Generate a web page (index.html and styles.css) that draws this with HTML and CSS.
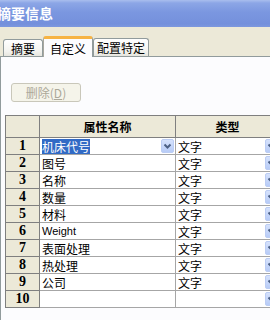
FILE: index.html
```html
<!DOCTYPE html>
<html lang="zh">
<head>
    <meta charset="UTF-8">
    <title>摘要信息</title>
    <link rel="stylesheet" href="styles.css">
</head>
<body>
    <div class="titlebar">摘要信息</div>

    <div class="tabs">
        <div class="tab tab-first">摘要</div>
        <div class="tab tab-active">自定义</div>
        <div class="tab tab-last">配置特定</div>
    </div>

    <div class="panel">
        <button class="btn-delete" disabled>删除(<u>D</u>)</button>

        <table class="grid">
            <colgroup>
                <col class="col-num">
                <col class="col-name">
                <col class="col-type">
            </colgroup>
            <thead>
                <tr>
                    <th class="corner"></th>
                    <th>属性名称</th>
                    <th>类型</th>
                </tr>
            </thead>
            <tbody>
                <tr>
                    <td class="num">1</td>
                    <td><div class="cell"><span class="selected">机床代号</span><span class="combo"></span></div></td>
                    <td><div class="cell"><span>文字</span><span class="combo"></span></div></td>
                </tr>
                <tr>
                    <td class="num">2</td>
                    <td><div class="cell"><span>图号</span></div></td>
                    <td><div class="cell"><span>文字</span><span class="combo"></span></div></td>
                </tr>
                <tr>
                    <td class="num">3</td>
                    <td><div class="cell"><span>名称</span></div></td>
                    <td><div class="cell"><span>文字</span><span class="combo"></span></div></td>
                </tr>
                <tr>
                    <td class="num">4</td>
                    <td><div class="cell"><span>数量</span></div></td>
                    <td><div class="cell"><span>文字</span><span class="combo"></span></div></td>
                </tr>
                <tr>
                    <td class="num">5</td>
                    <td><div class="cell"><span>材料</span></div></td>
                    <td><div class="cell"><span>文字</span><span class="combo"></span></div></td>
                </tr>
                <tr>
                    <td class="num">6</td>
                    <td><div class="cell"><span class="latin">Weight</span></div></td>
                    <td><div class="cell"><span>文字</span><span class="combo"></span></div></td>
                </tr>
                <tr>
                    <td class="num">7</td>
                    <td><div class="cell"><span>表面处理</span></div></td>
                    <td><div class="cell"><span>文字</span><span class="combo"></span></div></td>
                </tr>
                <tr>
                    <td class="num">8</td>
                    <td><div class="cell"><span>热处理</span></div></td>
                    <td><div class="cell"><span>文字</span><span class="combo"></span></div></td>
                </tr>
                <tr>
                    <td class="num">9</td>
                    <td><div class="cell"><span>公司</span></div></td>
                    <td><div class="cell"><span>文字</span><span class="combo"></span></div></td>
                </tr>
                <tr>
                    <td class="num">10</td>
                    <td><div class="cell"><span></span></div></td>
                    <td><div class="cell"><span></span><span class="combo"></span></div></td>
                </tr>
            </tbody>
        </table>
    </div>
</body>
</html>
```

FILE: styles.css
```css
/* window */
body {
    margin: 0;
    width: 270px;
    height: 320px;
    overflow: hidden;
    background-color: #ECE9D8;
    font-family: "Noto Sans CJK SC", sans-serif;
    font-size: 12px;
    color: #000;
    display: flex;
    flex-direction: column;
}

.titlebar {
    height: 27px;
    line-height: 26px;
    flex-shrink: 0;
    background: linear-gradient(#A9BEEE 0px, #8CA6E6 3px, #7B97E0 12px, #7490DC 24px, #7D98DE 27px);
    color: white;
    font-weight: bold;
    font-size: 14px;
    text-indent: -3px;
    white-space: nowrap;
}

/* tabs */
.tabs {
    height: 29px;
    flex-shrink: 0;
    display: flex;
    align-items: flex-end;
    padding-left: 3px;
}

.tab {
    height: 17px;
    line-height: 17px;
    box-sizing: border-box;
    border: 1px solid #919B9C;
    border-bottom: none;
    border-radius: 3px 3px 0 0;
    background: linear-gradient(#FFFFFF, #F3F3EF 70%, #E6E5DE);
    text-align: center;
    font-size: 12px;
}

.tab-first {
    width: 40px;
}

.tab-active {
    width: 50px;
    height: 21px;
    line-height: 19px;
    background: #FCFCFE;
    border-top: 3px solid #F6B343;
    border-left-color: #A8A8A0;
    margin-bottom: -1px;
    position: relative;
    z-index: 1;
}

.tab-last {
    width: 56px;
    height: 18px;
}

/* tab page */
.panel {
    flex: 1;
    background-color: #FCFCFE;
    border-top: 1px solid #919B9C;
    border-left: 1px solid #919B9C;
    display: flex;
    flex-direction: column;
    align-items: flex-start;
}

.btn-delete {
    margin: 26px 0 0 10px;
    width: 70px;
    height: 19px;
    padding: 0;
    border: 1px solid #C9C7BA;
    border-radius: 3px;
    background-color: #F5F4EA;
    color: #ACA899;
    font-family: "Noto Sans CJK SC", sans-serif;
    font-size: 12px;
    line-height: 16px;
}

/* property grid */
.grid {
    margin: 13px 0 0 4px;
    border-collapse: collapse;
    table-layout: fixed;
    width: 274px;
    flex-shrink: 0;
}

.col-num {
    width: 34px;
}

.col-name {
    width: 136px;
}

.col-type {
    width: 104px;
}

.grid th {
    height: 21px;
    padding: 0;
    background-color: #ECE9D8;
    border: 1px solid #7F7F7F;
    font-weight: bold;
    font-size: 12px;
    text-align: center;
}

.grid td {
    height: 16px;
    padding: 0;
    border: 1px solid #A6A6A6;
    border-left-color: #7F7F7F;
    background-color: #FFFFFF;
}

.grid td.num {
    background-color: #ECE9D8;
    border-color: #7F7F7F;
    text-align: center;
    font-family: "Liberation Serif", serif;
    font-weight: bold;
    font-size: 14px;
    line-height: 16px;
}

.cell {
    height: 16px;
    display: flex;
    align-items: center;
    justify-content: space-between;
    padding-left: 2px;
    padding-right: 1px;
    line-height: 15px;
    white-space: nowrap;
}

.selected {
    background-color: #316AC5;
    color: white;
}

.latin {
    font-family: "Liberation Sans", sans-serif;
    font-size: 11px;
}

/* XP style combo arrow */
.combo {
    width: 13px;
    height: 14px;
    box-sizing: border-box;
    border: 1px solid #BCCDF4;
    border-radius: 2px;
    background: linear-gradient(#D6E2FC, #B8CCF7);
    background-image: url("data:image/svg+xml,%3Csvg xmlns='http://www.w3.org/2000/svg' width='11' height='12'%3E%3Cpath d='M2.5 4.5 L5.5 7.5 L8.5 4.5' fill='none' stroke='%234D6185' stroke-width='2'/%3E%3C/svg%3E"), linear-gradient(#D6E2FC, #B8CCF7);
    flex-shrink: 0;
}
```
